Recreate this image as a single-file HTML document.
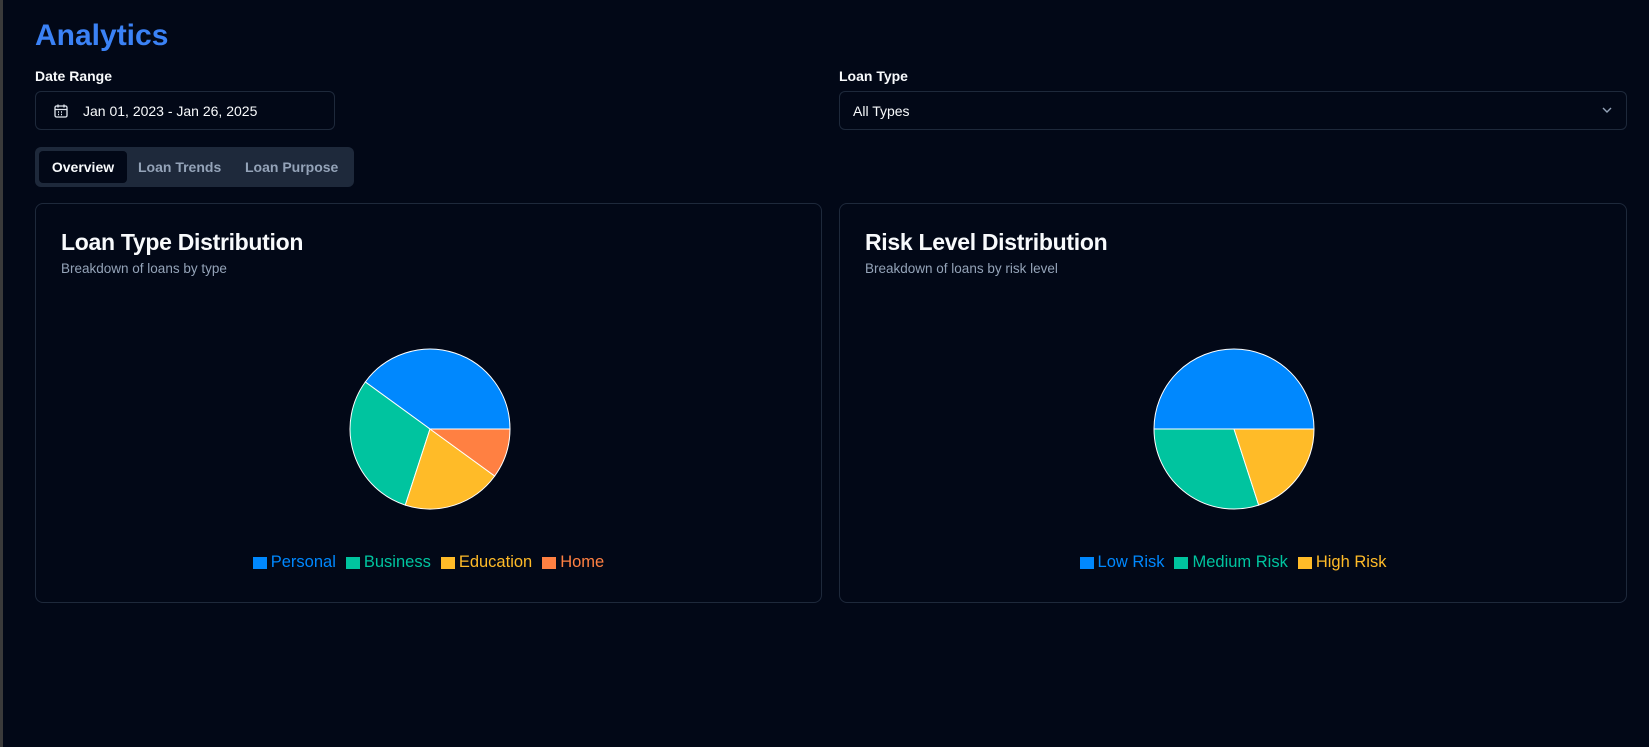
<!DOCTYPE html>
<html><head><meta charset="utf-8"><style>
*{box-sizing:border-box;margin:0;padding:0}
body{width:1649px;height:747px;background:#020817;font-family:"Liberation Sans",sans-serif;color:#f8fafc;position:relative;overflow:hidden}
.strip{position:absolute;left:0;top:0;width:3px;height:747px;background:#3a3a3a}
h1{position:absolute;left:35px;top:19px;font-size:30px;font-weight:700;color:#3b82f6}
.lbl{position:absolute;font-size:14px;font-weight:700;top:68px}
.box{position:absolute;top:91px;height:39px;border:1px solid #1e293b;border-radius:6px;font-size:14px;display:flex;align-items:center}
.tabs{position:absolute;left:35px;top:147px;width:319px;height:40px;background:#1e293b;border-radius:6px}
.tab{position:absolute;top:4px;height:32px;line-height:32px;font-size:14px;font-weight:700;color:#94a3b8}
.card{position:absolute;top:203px;height:400px;border:1px solid #1e293b;border-radius:8px}
.card h2{position:absolute;left:25px;top:25px;font-size:23px;font-weight:700;letter-spacing:-0.3px}
.card p{position:absolute;left:25px;top:57px;font-size:13.5px;color:#94a3b8}
.card svg{position:absolute;top:141px}
.leg{position:absolute;left:0;right:0;top:349px;display:flex;justify-content:center;font-size:16.5px}
.leg span{display:flex;align-items:center;margin:0 5px}
.leg i{display:inline-block;width:14px;height:12px;margin-right:4px}
</style></head><body>
<div class="strip"></div>
<h1>Analytics</h1>
<div class="lbl" style="left:35px">Date Range</div>
<div class="box" style="left:35px;width:300px;padding-left:17px">
<svg width="16" height="16" viewBox="0 0 16 16" fill="none" stroke="#e2e8f0" stroke-width="1.3"><rect x="2" y="3" width="12" height="11" rx="1.5"/><path d="M5 1.5v3M11 1.5v3M2 6.5h12"/><path d="M5 9h1M8 9h1M11 9h0M5 11.5h1M8 11.5h1" stroke-width="1.5"/></svg>
<span style="margin-left:14px">Jan 01, 2023 - Jan 26, 2025</span></div>
<div class="lbl" style="left:839px">Loan Type</div>
<div class="box" style="left:839px;width:788px;padding-left:13px">All Types
<svg style="position:absolute;right:14px;top:14px" width="10" height="8" viewBox="0 0 10 8" fill="none" stroke="#94a3b8" stroke-width="1.4"><path d="M1 2l4 4 4-4"/></svg></div>
<div class="tabs">
<div class="tab" style="left:4px;width:88px;background:#020817;border-radius:4px;color:#f8fafc;text-align:center">Overview</div>
<div class="tab" style="left:103px">Loan Trends</div>
<div class="tab" style="left:210px">Loan Purpose</div>
</div>
<div class="card" style="left:35px;width:787px">
<h2>Loan Type Distribution</h2><p>Breakdown of loans by type</p>
<svg style="left:310px" width="168" height="168" viewBox="-84 -84 168 168"><g stroke="#fff" stroke-width="1">
<path d="M0 0L80 0A80 80 0 0 0 -64.7 -47Z" fill="#0088FE"/>
<path d="M0 0L-64.7 -47A80 80 0 0 0 -24.7 76.1Z" fill="#00C49F"/>
<path d="M0 0L-24.7 76.1A80 80 0 0 0 64.7 47Z" fill="#FFBB28"/>
<path d="M0 0L64.7 47A80 80 0 0 0 80 0Z" fill="#FF8042"/></g></svg>
<div class="leg">
<span style="color:#0088FE"><i style="background:#0088FE"></i>Personal</span>
<span style="color:#00C49F"><i style="background:#00C49F"></i>Business</span>
<span style="color:#FFBB28"><i style="background:#FFBB28"></i>Education</span>
<span style="color:#FF8042"><i style="background:#FF8042"></i>Home</span></div>
</div>
<div class="card" style="left:839px;width:788px">
<h2>Risk Level Distribution</h2><p>Breakdown of loans by risk level</p>
<svg style="left:310px" width="168" height="168" viewBox="-84 -84 168 168"><g stroke="#fff" stroke-width="1">
<path d="M0 0L80 0A80 80 0 0 0 -80 0Z" fill="#0088FE"/>
<path d="M0 0L-80 0A80 80 0 0 0 24.7 76.1Z" fill="#00C49F"/>
<path d="M0 0L24.7 76.1A80 80 0 0 0 80 0Z" fill="#FFBB28"/></g></svg>
<div class="leg">
<span style="color:#0088FE"><i style="background:#0088FE"></i>Low Risk</span>
<span style="color:#00C49F"><i style="background:#00C49F"></i>Medium Risk</span>
<span style="color:#FFBB28"><i style="background:#FFBB28"></i>High Risk</span></div>
</div>
</body></html>
